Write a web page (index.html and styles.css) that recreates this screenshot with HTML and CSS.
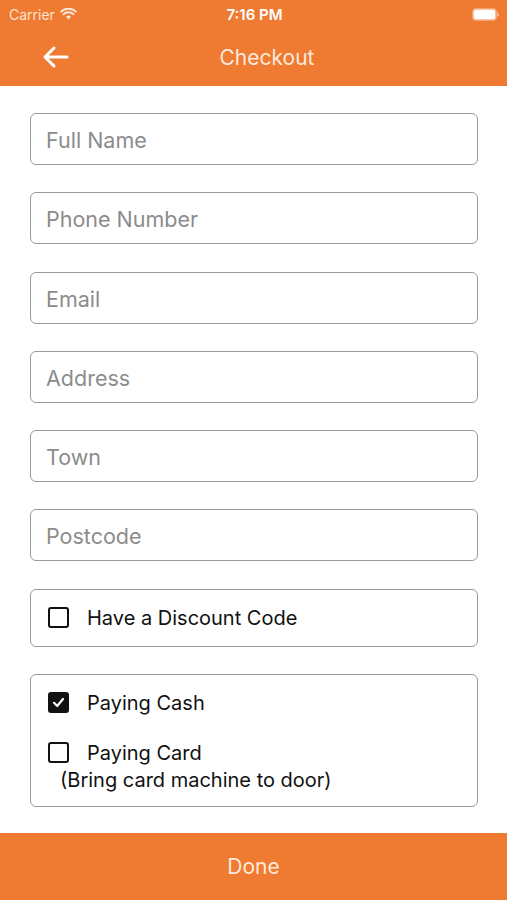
FILE: index.html
```html
<!DOCTYPE html>
<html lang="en">
<head>
  <meta charset="UTF-8">
  <title>Checkout</title>
  <link rel="stylesheet" href="styles.css">
</head>
<body>
  <div class="app">
    <!-- Cabecera naranja -->
    <header class="header">
      <div class="status-bar">
        <div class="status-left">
          <span>Carrier</span>
          <svg class="wifi" width="17" height="12" viewBox="0 0 17 12">
            <path d="M8.5 11.5 L6 8.6 A3.6 3.6 0 0 1 11 8.6 Z" fill="#fbe3d2"/>
            <path d="M3.6 6.2 A7 7 0 0 1 13.4 6.2" stroke="#fbe3d2" stroke-width="2" fill="none" stroke-linecap="round"/>
            <path d="M1.2 3.6 A10.5 10.5 0 0 1 15.8 3.6" stroke="#fbe3d2" stroke-width="2" fill="none" stroke-linecap="round"/>
          </svg>
        </div>
        <div class="status-time">7:16 PM</div>
        <div class="status-right">
          <svg width="28" height="13" viewBox="0 0 28 13">
            <rect x="1" y="1" width="23" height="11" rx="3" fill="#fff" stroke="#f6b48a" stroke-width="1.5"/>
            <rect x="25" y="4.5" width="2" height="4" rx="1" fill="#f6b48a"/>
          </svg>
        </div>
      </div>
      <div class="nav-bar">
        <svg class="back" width="28" height="24" viewBox="0 0 28 24">
          <path d="M26 12 H4 M13 3 L4 12 L13 21" stroke="#fff" stroke-width="3" fill="none" stroke-linecap="round" stroke-linejoin="round"/>
        </svg>
        <div class="nav-title">Checkout</div>
      </div>
    </header>

    <!-- Formulario -->
    <main class="form">
      <div class="field">Full Name</div>
      <div class="field">Phone Number</div>
      <div class="field">Email</div>
      <div class="field">Address</div>
      <div class="field">Town</div>
      <div class="field">Postcode</div>

      <div class="box discount">
        <div class="check-row">
          <span class="checkbox"></span>
          <span>Have a Discount Code</span>
        </div>
      </div>

      <div class="box payment">
        <div class="check-row">
          <span class="checkbox checked">
            <svg width="15" height="15" viewBox="0 0 15 15">
              <path d="M3 7.8 L6.2 11 L12 4" stroke="#fff" stroke-width="2.2" fill="none" stroke-linecap="round" stroke-linejoin="round"/>
            </svg>
          </span>
          <span>Paying Cash</span>
        </div>
        <div class="check-row card-row">
          <span class="checkbox"></span>
          <span>Paying Card</span>
        </div>
        <div class="note">(Bring card machine to door)</div>
      </div>
    </main>

    <div class="done">Done</div>
  </div>
</body>
</html>
```

FILE: styles.css
```css
body {
  margin: 0;
  padding: 0;
  background-color: #fff;
  font-family: Inter, "Liberation Sans", sans-serif;
}

.app {
  width: 507px;
  height: 900px;
  display: flex;
  flex-direction: column;
  overflow: hidden;
}

/* Cabecera */
.header {
  background-color: #ee7b31;
  height: 86px;
  color: #fff;
}

.status-bar {
  height: 28px;
  display: flex;
  align-items: center;
  justify-content: space-between;
  padding: 0 7px 0 9px;
  font-size: 14px;
  color: #fbe3d2;
}

.status-left {
  width: 120px;
  display: flex;
  align-items: center;
  gap: 5px;
}

.status-time {
  font-size: 15px;
  font-weight: 600;
  color: #fff;
}

.status-right {
  width: 120px;
  display: flex;
  justify-content: flex-end;
}

.nav-bar {
  height: 58px;
  display: flex;
  align-items: center;
  padding-left: 41px;
}

.back {
  flex-shrink: 0;
}

.nav-title {
  flex: 1;
  text-align: center;
  padding-right: 42px;
  font-size: 21px;
  color: #fde9dc;
}

/* Formulario */
.form {
  padding: 27px 29px 0 30px;
  display: flex;
  flex-direction: column;
  gap: 27.25px;
}

.field {
  border: 1px solid #9a9a9a;
  border-radius: 6px;
  display: flex;
  align-items: center;
  padding: 2px 0 0 15px;
  height: 48px;
  font-size: 21.5px;
  color: #8c8c8c;
}

.box {
  border: 1px solid #9a9a9a;
  border-radius: 6px;
  font-size: 20px;
  color: #111;
}

.discount {
  height: 56px;
  display: flex;
  align-items: center;
}

.payment {
  padding-top: 16px;
  box-sizing: border-box;
  height: 133px;
}

.check-row {
  display: flex;
  align-items: center;
  gap: 18px;
  padding-left: 17px;
  height: 24px;
}

.card-row {
  margin-top: 26px;
}

.checkbox {
  width: 17px;
  height: 17px;
  border: 2px solid #111;
  border-radius: 3px;
  display: flex;
  align-items: center;
  justify-content: center;
}

.checkbox.checked {
  background: #111;
}

.note {
  padding-left: 29px;
  margin-top: 3px;
}

/* Botón */
.done {
  margin-top: auto;
  height: 67px;
  background-color: #ee7b31;
  color: #fde9dc;
  font-size: 21px;
  display: flex;
  align-items: center;
  justify-content: center;
}
```
